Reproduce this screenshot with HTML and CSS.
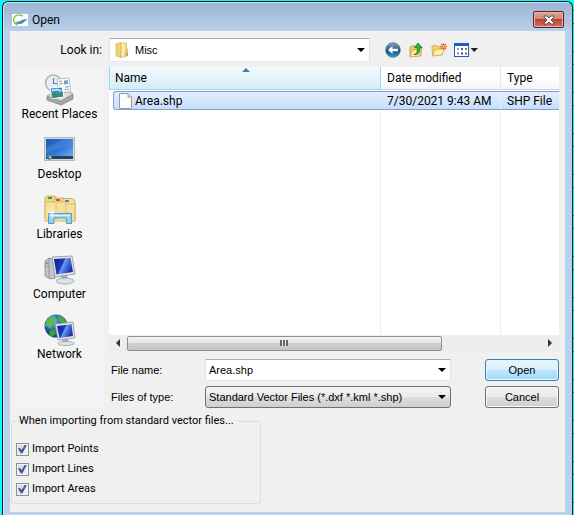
FILE: index.html
```html
<!DOCTYPE html>
<html lang="en">
<head>
    <meta charset="UTF-8">
    <meta name="viewport" content="width=device-width, initial-scale=1.0">
    <title>Open</title>
    <link rel="stylesheet" href="styles.css">
</head>
<body>

<div class="window">
    <div class="titlebar">
        <svg class="app-icon" viewBox="0 0 16 12">
            <rect width="16" height="12" fill="#fff"/>
            <path d="M11 2C6 -.5 1 2 1.500 6.500C2 9 4 10.500 6 11" fill="none" stroke="#94c83d" stroke-width="1.400"/>
            <path d="M3 8C7 8.500 11 4 15.500 5.500C13 6 11.500 10.500 6.500 10C5 10 4 9 3 8Z" fill="#2c6d9c"/>
            <path d="M6 9.500L13 6.500M4 8.500L10 6.500" stroke="#a8cde4" stroke-width=".6"/>
        </svg>
        <h1 class="title">Open</h1>
        <button class="close-btn" type="button" aria-label="Close">
            <svg viewBox="0 0 12 10" width="12" height="10">
                <path d="M1 1H4L6 3L8 1H11V2L8 5L11 8V9H8L6 7L4 9H1V8L4 5L1 2Z" fill="#fff" stroke="#5a4048" stroke-width=".9"/>
            </svg>
        </button>
    </div>

    <form class="client">
        <div class="lookin-row">
            <label class="lookin-label" for="look-in">Look in:</label>
            <div class="dropdown lookin">
                <svg class="folder-icon" viewBox="0 0 14 16" width="14" height="16">
                    <path d="M1 1.500L6 .5V15.500L1 14Z" fill="#ecd377" stroke="#d9b850" stroke-width=".7"/>
                    <path d="M6 1H11.500V14L6 15.500Z" fill="#f5e29a" stroke="#d9b850" stroke-width=".7"/>
                    <path d="M8 2V14.500" stroke="#fff6cf"/>
                    <path d="M11 6L13 7V14L9 15Z" fill="#e3c05a"/>
                    <path d="M12.500 11V14" stroke="#76a9cf"/>
                </svg>
                <select id="look-in"><option>Misc</option></select>
            </div>
            <div class="tools">
                <button type="button" aria-label="Back">
                    <svg viewBox="0 0 16 16" width="16" height="16">
                        <defs>
                            <linearGradient id="ball" x2="0" y2="1">
                                <stop stop-color="#8aa5bc"/><stop offset=".45" stop-color="#2f618f"/>
                                <stop offset=".55" stop-color="#164a7a"/><stop offset="1" stop-color="#2ba5d6"/>
                            </linearGradient>
                        </defs>
                        <circle cx="8" cy="8" r="7.300" fill="url(#ball)" stroke="#52718b" stroke-width=".8"/>
                        <path d="M3 8L7.500 4V6.800H13V9.200H7.500V12Z" fill="#fff"/>
                    </svg>
                </button>
                <button type="button" aria-label="Up one level">
                    <svg viewBox="0 0 16 16" width="16" height="16">
                        <path d="M2 5L6 3.500L7 5H13V14H2Z" fill="#eccb68" stroke="#c89a32" stroke-width=".8"/>
                        <path d="M2 15L4 8L14 6.500L12 14Z" fill="#fbe89e" stroke="#cfa440" stroke-width=".8"/>
                        <path d="M6 12.500C9.500 12 9.500 9 9 5.500H6.500L10 1L14 5.500H11.800C12.500 9 11.500 13 6 12.500Z" fill="#3fae35" stroke="#1c7420" stroke-width=".7"/>
                    </svg>
                </button>
                <button type="button" aria-label="Create new folder">
                    <svg viewBox="0 0 16 16" width="16" height="16">
                        <path d="M1 4L5 3L6 4.500H11V13H1.500Z" fill="#f0d27a" stroke="#d3a744" stroke-width=".8"/>
                        <path d="M1.500 14L4 7.500L14 6.500L11 13Z" fill="#fdeeb0" stroke="#d3a744" stroke-width=".8"/>
                        <path d="M12.500 1V8M9 4.500H16M10 2L15 7M15 2L10 7" stroke="#ef5b34" stroke-width="1.100"/>
                        <circle cx="12.500" cy="4.500" r="1.200" fill="#ffd36b"/>
                    </svg>
                </button>
                <button class="view-btn" type="button" aria-label="View menu">
                    <svg viewBox="0 0 24 14" width="24" height="14">
                        <rect x=".5" y=".5" width="14" height="13" fill="#fff" stroke="#1560c5"/>
                        <path d="M0 1.500H15" stroke="#1560c5" stroke-width="3"/>
                        <path d="M3 5.500H5M3 6.500H5" stroke="#8fa3ba"/>
                        <path d="M7 6H9" stroke="#3d59a8" stroke-width="2"/>
                        <path d="M11 6H13" stroke="#4fa34b" stroke-width="2"/>
                        <path d="M3 10.500H5" stroke="#e66a3c" stroke-width="2"/>
                        <path d="M7 10.500H9" stroke="#2e3f94" stroke-width="2"/>
                        <path d="M11 10.500H13" stroke="#b0503d" stroke-width="2"/>
                        <path d="M16.500 5H24L20.200 9Z" fill="#222"/>
                    </svg>
                </button>
            </div>
        </div>

        <div class="browser">
            <nav class="places">
                <button class="place" type="button">
                    <svg viewBox="0 0 32 32">
                        <circle cx="9.500" cy="9" r="8" fill="#e4eef4" stroke="#a9b5bd" stroke-width="1.500"/>
                        <path d="M9.500 4V9.500H14" fill="none" stroke="#6d8191" stroke-width="1.200"/>
                        <path d="M13 5L25 4L27 20L15 21Z" fill="#fbfbfb" stroke="#a9a9a9" stroke-width=".7"/>
                        <path d="M15 7.500L18 7.200M15 10L19 9.500M21 13L25 12.700M21 15.500L25 15.200" stroke="#8d979e"/>
                        <path d="M20 6.500L24 6.200V10L20 10.400Z" fill="#7d9fba"/>
                        <path d="M3 22L18 26L29 20V25L17 31L3 26Z" fill="#a7a7a7" stroke="#777" stroke-width=".7"/>
                        <path d="M3 22L8 19L25 18L29 20L17 27Z" fill="#dedede" stroke="#8d8d8d" stroke-width=".7"/>
                        <path d="M6 14L18 13L20 23L8 24.500Z" fill="#3f8fd0" stroke="#fff"/>
                        <path d="M7.500 20L11 18L14 20L18.500 18L19 22.500L8 24Z" fill="#3d8b6a"/>
                        <path d="M8 16.500L13 15.500L17 17" fill="none" stroke="#d7effb" stroke-width="1.500"/>
                    </svg>
                    <span>Recent Places</span>
                </button>
                <button class="place" type="button">
                    <svg viewBox="0 0 32 32">
                        <defs>
                            <linearGradient id="desk" x2="1" y2="1">
                                <stop stop-color="#2358b6"/><stop offset=".5" stop-color="#2f74d5"/><stop offset="1" stop-color="#7fb4ee"/>
                            </linearGradient>
                        </defs>
                        <rect x=".5" y="3.500" width="30" height="23" fill="#d4d9de" stroke="#b3b9bf"/>
                        <rect x="2" y="5" width="27" height="20" fill="url(#desk)"/>
                        <path d="M2 14L20 5H29V10L2 19Z" fill="#6da6ed" opacity=".25"/>
                        <rect x="2" y="22" width="27" height="3" fill="#24405c"/>
                        <circle cx="5.500" cy="23" r="2.800" fill="#2c79b5"/>
                        <path d="M4 21.500H5.500V23H4Z" fill="#ee6c3b"/>
                        <path d="M5.500 21.500H7V23H5.500Z" fill="#86cf4c"/>
                        <path d="M5.500 23H7V24.500H5.500Z" fill="#ffd84e"/>
                    </svg>
                    <span>Desktop</span>
                </button>
                <button class="place" type="button">
                    <svg viewBox="0 0 32 32">
                        <path d="M1 4L3 2H11L12 4V24H1Z" fill="#eed68b" stroke="#c7a64c" stroke-width=".8"/>
                        <path d="M10 6L12 4H20L21 6V24H10Z" fill="#f1dc96" stroke="#c7a64c" stroke-width=".8"/>
                        <path d="M18 6L20 4.500H29L31 7V27H18Z" fill="#f3dfa0" stroke="#c7a64c" stroke-width=".8"/>
                        <path d="M1 8H20L22 10H31V27H1Z" fill="#f5e19c" stroke="#cfae57" stroke-width=".8"/>
                        <path d="M12 9V26M22 10V26" stroke="#dfc477"/>
                        <path d="M4 4H8" stroke="#34a048" stroke-width="2"/>
                        <path d="M12 6H16" stroke="#d84a35" stroke-width="2"/>
                        <path d="M21 7H25" stroke="#3b88d0" stroke-width="2"/>
                        <path d="M4.500 29.500V19.500H27.500V29.500H22.500V24H10V29.500Z" fill="#97d2ec" stroke="#539fc7"/>
                        <path d="M6 21.500H26" stroke="#d7f2fd" stroke-width="1.500"/>
                        <path d="M8 13V24M3 18.500H13M5 15.500L11 21.500M11 15.500L5 21.500" stroke="#fff" stroke-width=".8"/>
                    </svg>
                    <span>Libraries</span>
                </button>
                <button class="place" type="button">
                    <svg viewBox="0 0 32 32">
                        <defs>
                            <linearGradient id="screen" x2="1" y2=".4">
                                <stop stop-color="#0a1c92"/><stop offset=".5" stop-color="#183bc4"/>
                                <stop offset=".55" stop-color="#6d9af0"/><stop offset="1" stop-color="#1a34b5"/>
                            </linearGradient>
                        </defs>
                        <path d="M1 7L5 4L11 6V24L6 25L1 22Z" fill="#c2c5c8" stroke="#7d8287" stroke-width=".8"/>
                        <path d="M5 4V24M1.500 10L5 9M1.500 13L5 12" stroke="#898e92" stroke-width=".8"/>
                        <circle cx="3" cy="9" r="1" fill="#44ba3c"/>
                        <path d="M17 22L23 21L24 26H18Z" fill="#a4a9ad"/>
                        <ellipse cx="21" cy="27" rx="9" ry="3" fill="#dfe2e4" stroke="#999fa3" stroke-width=".8"/>
                        <path d="M8 3L28 2L31 20L11 23Z" fill="#e1e3e5" stroke="#8e9499" stroke-width=".8"/>
                        <path d="M10 5L26.500 4L29 18L12.500 20.500Z" fill="url(#screen)"/>
                    </svg>
                    <span>Computer</span>
                </button>
                <button class="place" type="button">
                    <svg viewBox="0 0 32 32">
                        <defs>
                            <radialGradient id="globe" cx=".35" cy=".3">
                                <stop stop-color="#7fc9f2"/><stop offset=".6" stop-color="#2c74c2"/><stop offset="1" stop-color="#174489"/>
                            </radialGradient>
                        </defs>
                        <circle cx="12" cy="12" r="11.500" fill="url(#globe)"/>
                        <path d="M3 6L8 2L12 3L10 6L12 9L8 11L7 15L3 12L1 12Z" fill="#61b84b"/>
                        <path d="M14 1L20 4L23 9L18 10L15 7Z" fill="#4ea73e"/>
                        <path d="M6 16L11 15L12 20L8 23L5 21Z" fill="#3f9740"/>
                        <path d="M18 26L24 25L25 29H19Z" fill="#a4a9ad"/>
                        <ellipse cx="22" cy="29.500" rx="8" ry="2" fill="#e1e4e6" stroke="#999fa3" stroke-width=".8"/>
                        <path d="M11 10L29 8L31 24L14 26Z" fill="#e1e3e5" stroke="#8e9499" stroke-width=".8"/>
                        <path d="M13 12L27.500 10.200L29 22L15.500 24Z" fill="url(#screen)"/>
                    </svg>
                    <span>Network</span>
                </button>
            </nav>

            <div class="main">
                <div class="file-list">
                    <table class="files">
                        <colgroup>
                            <col class="col-name">
                            <col class="col-date">
                            <col>
                        </colgroup>
                        <thead>
                            <tr>
                                <th class="sorted" aria-sort="ascending">Name</th>
                                <th>Date modified</th>
                                <th>Type</th>
                            </tr>
                        </thead>
                        <tbody>
                            <tr class="gap-row"><td></td><td></td><td></td></tr>
                            <tr class="selected">
                                <td class="name-cell">
                                    <div class="file-name">
                                        <svg viewBox="0 0 13 16" width="13" height="16">
                                            <path d="M.5 .5H9L12.500 4V15.500H.5Z" fill="#fbfbfb" stroke="#9a9a9a"/>
                                            <path d="M9 .5V4H12.500" fill="#ddd" stroke="#9a9a9a"/>
                                        </svg>
                                        <span>Area.shp</span>
                                    </div>
                                </td>
                                <td>7/30/2021 9:43 AM</td>
                                <td>SHP File</td>
                            </tr>
                            <tr class="filler"><td></td><td></td><td></td></tr>
                        </tbody>
                    </table>
                    <div class="scrollbar">
                        <span class="arrow left"></span>
                        <div class="track"><div class="thumb"></div></div>
                        <span class="arrow right"></span>
                    </div>
                </div>

                <div class="fields">
                    <label for="file-name">File name:</label>
                    <div class="dropdown">
                        <input type="text" id="file-name" value="Area.shp">
                    </div>
                    <button class="btn primary" type="button">Open</button>

                    <label for="file-type">Files of type:</label>
                    <div class="dropdown">
                        <select id="file-type" class="file-type">
                            <option>Standard Vector Files (*.dxf *.kml *.shp)</option>
                        </select>
                    </div>
                    <button class="btn" type="button">Cancel</button>
                </div>
            </div>
        </div>

        <fieldset class="import-options">
            <legend>When importing from standard vector files...</legend>
            <label><input type="checkbox" checked>Import Points</label>
            <label><input type="checkbox" checked>Import Lines</label>
            <label><input type="checkbox" checked>Import Areas</label>
        </fieldset>
    </form>
</div>

</body>
</html>
```

FILE: styles.css
```css
* {
    box-sizing: border-box;
}

/* Canvas behind the dialog, with red ticks along the right edge */
body {
    margin: 0;
    min-height: 100vh;
    padding: 1px 1px 0 2px;
    display: flex;
    font-family: Roboto, "Open Sans", sans-serif;
    font-size: 12px;
    color: #000;
    background:
        linear-gradient(transparent 10px, #d22 10px, #d22 11px, transparent 11px, transparent 23px, #d22 23px, #d22 24px, transparent 24px) right top / 2px 41px repeat-y,
        #00ffff;
}

button, input, select {
    font: inherit;
    color: inherit;
    margin: 0;
    padding: 0;
}

/* Window frame */
.window {
    flex: 1;
    min-width: 0;
    display: flex;
    flex-direction: column;
    border: 1px solid #16202c;
    border-bottom: none;
    border-radius: 6px 6px 0 0;
    padding: 0 7px 3px 7px;
    background: linear-gradient(#9ab4d2, #b9d1ea 30px);
    box-shadow: inset 1px 1px 0 #d5e4f3;
}

.titlebar {
    display: flex;
    align-items: center;
    height: 29px;
    padding: 6px 1px 0 2px;
}

.app-icon {
    width: 16px;
    height: 12px;
}

.title {
    flex: 1;
    margin: 0 0 0 4px;
    font-size: 12px;
    font-weight: normal;
}

.close-btn {
    width: 31px;
    height: 17px;
    display: flex;
    align-items: center;
    justify-content: center;
    border: 1px solid #5c2226;
    border-radius: 2px;
    background: linear-gradient(#dfa69b, #d08072 48%, #bb4532 50%, #cf7562);
    box-shadow: inset 0 0 0 1px #e5b5ab;
}

.client {
    flex: 1;
    display: flex;
    flex-direction: column;
    background: #f0f0f0;
}

/* Look in row */
.lookin-row {
    display: flex;
    align-items: center;
    padding: 7px 0 5px 0;
}

.lookin-label {
    width: 99px;
    padding-right: 7px;
    text-align: right;
}

.dropdown {
    position: relative;
}

.dropdown::after {
    content: "";
    position: absolute;
    right: 5px;
    top: 50%;
    margin-top: -2px;
    border: 4px solid transparent;
    border-top-color: #000;
    border-bottom: none;
    pointer-events: none;
}

.dropdown select, .dropdown input {
    display: block;
    width: 100%;
    height: 22px;
    padding: 0 3px;
    appearance: none;
    border: 1px solid #e2e3ea;
    border-top-color: #abadb3;
    border-radius: 1px;
    outline: none;
    background: #fff;
}

.lookin {
    flex: 1;
}

.dropdown #look-in {
    height: 24px;
    padding-left: 25px;
    font-family: "Liberation Sans", Arial, sans-serif;
    font-size: 11px;
}

.folder-icon {
    position: absolute;
    left: 6px;
    top: 4px;
}

.tools {
    width: 195px;
    display: flex;
    align-items: center;
    gap: 7px;
    padding-left: 15px;
}

.tools button {
    display: flex;
    border: none;
    background: none;
}

/* Places bar and file list */
.browser {
    display: flex;
    gap: 6px;
    padding: 0 6px;
}

.places {
    width: 87px;
    display: flex;
    flex-direction: column;
    gap: 12px;
    padding-top: 7px;
    background: #f4f4f4;
}

.place {
    display: flex;
    flex-direction: column;
    align-items: center;
    border: none;
    background: none;
    line-height: 16px;
    white-space: nowrap;
}

.place svg {
    width: 32px;
    height: 32px;
}

.main {
    flex: 1;
    min-width: 0;
}

.file-list {
    background: #fff;
}

.files {
    width: 100%;
    height: 268px;
    table-layout: fixed;
    border-collapse: separate;
    border-spacing: 0;
}

.col-name {
    width: 272px;
}

.col-date {
    width: 120px;
}

.files th {
    height: 23px;
    padding: 0 6px;
    text-align: left;
    font-weight: normal;
    border-right: 1px solid #e3e8ee;
    border-bottom: 1px solid #d5d5d5;
    background: linear-gradient(#fff 50%, #f5f6f8);
}

.files .sorted {
    padding-left: 5px;
    background: linear-gradient(#f4fbfe, #e3f3fa 50%, #d6ecf5);
    border: solid #96d9f9;
    border-width: 0 1px 1px 1px;
    position: relative;
}

.sorted::after {
    content: "";
    position: absolute;
    left: 132px;
    top: 1px;
    border: 4px solid transparent;
    border-bottom-color: #4c7f9f;
    border-top: none;
}

.files td {
    padding: 0 6px;
    white-space: nowrap;
    border-right: 1px solid #e8f1fb;
}

.files th:last-child, .files td:last-child {
    border-right: none;
}

.gap-row td {
    height: 1px;
}

.selected td {
    height: 19px;
    border-top: 1px solid #7da2ce;
    border-bottom: 1px solid #7da2ce;
    background: linear-gradient(#e4effd, #c6defc);
}

.files .name-cell {
    padding: 0 0 0 4px;
    border: none;
    background: none;
}

.file-name {
    display: flex;
    align-items: center;
    gap: 3px;
    height: 19px;
    padding-left: 5px;
    border: 1px solid #7da2ce;
    border-right: none;
    border-radius: 3px 0 0 3px;
    background: linear-gradient(#e4effd, #c6defc);
}

/* Horizontal scrollbar */
.scrollbar {
    display: flex;
    align-items: center;
    height: 16px;
    background: #ededed;
}

.arrow {
    width: 18px;
    display: flex;
    justify-content: center;
}

.arrow::before {
    content: "";
    border: 4px solid transparent;
}

.arrow.left::before {
    border-right-color: #333;
    border-left: none;
}

.arrow.right::before {
    border-left-color: #333;
    border-right: none;
}

.track {
    flex: 1;
}

.thumb {
    width: 76%;
    height: 15px;
    border: 1px solid #8f8f8f;
    border-radius: 2px;
    background:
        repeating-linear-gradient(90deg, #666 0, #666 2px, #eee 2px, #eee 3px) center / 8px 6px no-repeat,
        linear-gradient(#f4f4f4, #e4e4e4 48%, #cfcfcf 50%, #c5c5c9);
}

/* File name, type and buttons */
.fields {
    display: grid;
    grid-template-columns: 96px 1fr 74px;
    row-gap: 5px;
    align-items: center;
    padding-top: 8px;
    font-family: "Liberation Sans", Arial, sans-serif;
    font-size: 11px;
}

.fields label {
    padding-left: 2px;
}

.fields .dropdown {
    margin-right: 34px;
}

.dropdown .file-type {
    border: 1px solid #707070;
    border-radius: 3px;
    background: linear-gradient(#f2f2f2, #ebebeb 48%, #dddddd 50%, #cfcfcf);
}

.btn {
    height: 22px;
    border: 1px solid #707070;
    border-radius: 3px;
    background: linear-gradient(#f2f2f2, #ebebeb 48%, #dddddd 50%, #cfcfcf);
    box-shadow: inset 0 0 0 1px #fafafa;
}

.btn.primary {
    border-color: #3c7fb1;
    background: linear-gradient(#eaf6fd, #d9f0fc 48%, #bee6fd 50%, #a7d9f5);
    box-shadow: inset 0 0 0 1px #e3f5fd;
}

/* Import options */
.import-options {
    width: 250px;
    margin: 5px 0 0 1px;
    padding: 12px 4px 6px 4px;
    display: flex;
    flex-direction: column;
    gap: 4px;
    border: 1px solid #d5dfe5;
    border-radius: 3px;
    font-size: 11px;
}

.import-options legend {
    padding: 0 3px;
    line-height: 16px;
    white-space: nowrap;
}

.import-options label {
    display: flex;
    align-items: center;
    gap: 3px;
    line-height: 16px;
}

.import-options input {
    width: 13px;
    height: 13px;
    appearance: none;
    display: grid;
    place-items: center;
    border: 1px solid #8e8f8f;
    background: linear-gradient(135deg, #cfd5dc, #f6f6f6);
    box-shadow: inset 0 0 0 1px #f4f4f4;
}

.import-options input:checked::before {
    content: "";
    width: 9px;
    height: 9px;
    background: #3f5796;
    clip-path: polygon(0 45%, 22% 38%, 40% 62%, 78% 0, 100% 0, 48% 100%, 34% 100%);
}
```
